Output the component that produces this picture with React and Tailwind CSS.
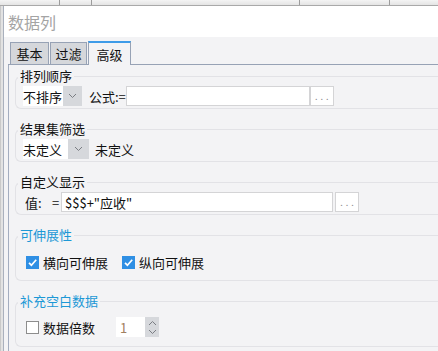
import React from 'react'

function Chevron({ up = false }) {
  return (
    <svg width="9" height="6" viewBox="0 0 9 6" className="block">
      <polyline
        points={up ? '1,5 4.5,1.5 8,5' : '1,1 4.5,4.5 8,1'}
        fill="none"
        stroke="#7a7d83"
        strokeWidth="1"
      />
    </svg>
  )
}

function Select({ label, textW, arrowW }) {
  return (
    <div className="flex h-[20px] shrink-0">
      <div className={'bg-white flex items-center text-[13px] leading-none text-[#111] ' + textW}>{label}</div>
      <div className={'bg-[#d6d8dc] flex items-center justify-center ' + arrowW}>
        <Chevron />
      </div>
    </div>
  )
}

function DotsButton() {
  return (
    <div className="h-[20px] w-[24px] shrink-0 bg-white border border-[#d4d4d6] flex items-end justify-center pb-[4px]">
      <span className="text-[9px] leading-none tracking-[3px] text-[#8c8c8c] pl-[3px]">...</span>
    </div>
  )
}

function Check({ on }) {
  if (on) {
    return (
      <span className="w-[13px] h-[13px] bg-[#2f8fe4] flex items-center justify-center shrink-0">
        <svg width="11" height="11" viewBox="0 0 11 11">
          <path d="M2 5.8 L4.4 8.2 L9.2 2.8" fill="none" stroke="white" strokeWidth="1.7" />
        </svg>
      </span>
    )
  }
  return <span className="w-[13px] h-[13px] bg-white border border-[#8d8d8d] shrink-0" />
}

// 分组框，标题压在上边框
function Group({ title, blue, className = '', children }) {
  return (
    <fieldset className={'border border-r-0 border-[#e2e2e6] rounded-l-[6px] ' + className}>
      <legend className={'ml-[2px] px-[2px] text-[13px] leading-[16px] ' + (blue ? 'text-[#1c98d6]' : 'text-[#111]')}>
        {title}
      </legend>
      {children}
    </fieldset>
  )
}

export default function App() {
  return (
    <div className="w-[438px] h-[351px] overflow-hidden flex flex-col bg-[#e6e6e6] font-['Noto_Sans_CJK_SC','Microsoft_YaHei',sans-serif]">
      {/* 背景表头 */}
      <div className="h-[6px] shrink-0 flex bg-gradient-to-b from-[#f4f4f4] to-[#e4e4e4] border-b border-[#a9a9a9]">
        <div className="w-[60px] border-r border-[#9c9c9c]" />
        <div className="w-[32px] border-r border-[#9c9c9c]" />
        <div className="w-[208px] border-r border-[#9c9c9c]" />
        <div className="w-[90px] border-r border-[#9c9c9c]" />
        <div className="flex-1" />
      </div>

      <div className="flex flex-1 min-h-0">
        <div className="w-[3px] shrink-0 bg-[#e2e2e2] border-l border-[#c9c9c9]" />

        {/* 窗口 */}
        <div className="flex-1 flex flex-col border-l border-[#a9b0bd]">
          <div className="h-[31px] shrink-0 bg-white flex items-center pl-[4px] text-[16px] leading-none text-[#a4a4a4]">
            数据列
          </div>

          <div className="flex-1 bg-[#f3f3f5] pl-[4px] pt-[4px] flex flex-col">
            {/* 标签页 */}
            <div className="h-[24px] shrink-0 flex items-end gap-[1px] pl-[2px] border-b border-[#97a2b5]">
              <div className="w-[39px] h-[22px] bg-[#d5d7db] border border-b-0 border-[#97a2b5] flex items-center justify-center text-[13px] leading-none text-[#111]">
                基本
              </div>
              <div className="w-[37px] h-[22px] bg-[#d5d7db] border border-b-0 border-[#97a2b5] flex items-center justify-center text-[13px] leading-none text-[#111]">
                过滤
              </div>
              <div className="w-[43px] h-[24px] -mb-[1px] bg-[#f3f3f5] border-x border-[#97a2b5] border-t-2 border-t-[#3d9be8] flex items-center justify-center text-[13px] leading-none text-[#111]">
                高级
              </div>
            </div>

            {/* 内容 */}
            <div className="flex-1 border-l border-[#a3adbf] pl-[6px] pt-[3px]">
              <Group title="排列顺序">
                <div className="flex items-center h-[20px] mt-[2px] mb-[2px] ml-[7px]">
                  <Select label="不排序" textW="w-[40px]" arrowW="w-[19px]" />
                  <span className="ml-[7px] text-[13px] leading-none text-[#111]">公式:=</span>
                  <div className="h-[20px] w-[184px] bg-white border border-[#d4d4d6]" />
                  <DotsButton />
                </div>
              </Group>

              <Group title="结果集筛选" className="mt-[12px]">
                <div className="flex items-center h-[20px] mt-[2px] mb-[2px] ml-[7px]">
                  <Select label="未定义" textW="w-[45px]" arrowW="w-[21px]" />
                  <span className="ml-[6px] text-[13px] leading-none text-[#111]">未定义</span>
                </div>
              </Group>

              <Group title="自定义显示" className="mt-[12px]">
                <div className="flex items-center h-[20px] mt-[2px] mb-[2px] ml-[9px]">
                  <span className="text-[13px] leading-none text-[#111] w-[27px]">值:</span>
                  <span className="text-[13px] leading-none text-[#111] w-[9px]">=</span>
                  <div className="h-[20px] w-[272px] bg-white border border-[#d4d4d6] flex items-center pl-[3px] text-[13px] leading-none text-[#111]">
                    $$$+"应收"
                  </div>
                  <div className="ml-[2px]">
                    <DotsButton />
                  </div>
                </div>
              </Group>

              <Group title="可伸展性" blue className="mt-[12px]">
                <div className="flex items-center h-[20px] mt-[9px] mb-[8px] ml-[10px] text-[13px] leading-none text-[#111]">
                  <Check on />
                  <span className="ml-[4px]">横向可伸展</span>
                  <span className="ml-[14px]">
                    <Check on />
                  </span>
                  <span className="ml-[4px]">纵向可伸展</span>
                </div>
              </Group>

              <Group title="补充空白数据" blue className="mt-[12px]">
                <div className="flex items-center h-[20px] mt-[8px] mb-[9px] ml-[10px] text-[13px] leading-none text-[#111]">
                  <Check />
                  <span className="ml-[4px]">数据倍数</span>
                  <div className="ml-[21px] flex h-[20px]">
                    <div className="w-[29px] bg-white flex items-center pl-[4px] text-[#a08060]">1</div>
                    <div className="w-[14px] bg-[#d6d8dc] flex flex-col items-center justify-center gap-[3px]">
                      <Chevron up />
                      <Chevron />
                    </div>
                  </div>
                </div>
              </Group>
            </div>
          </div>
        </div>
      </div>
    </div>
  )
}
